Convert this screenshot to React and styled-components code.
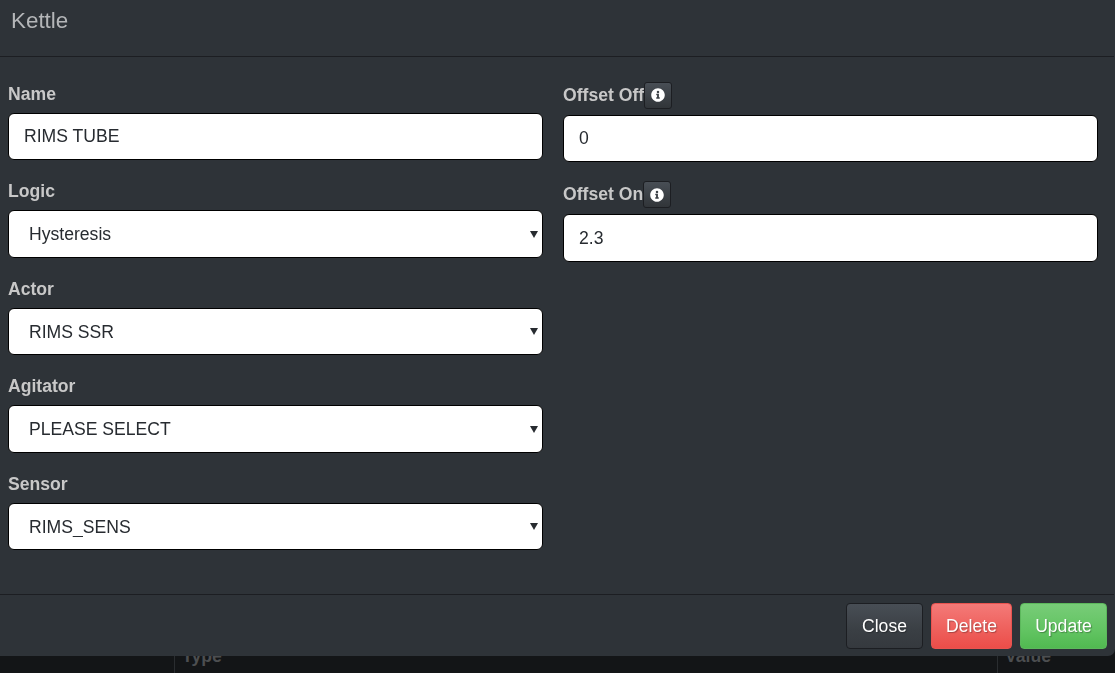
import React from "react";
import styled, { createGlobalStyle } from "styled-components";

const Global = createGlobalStyle`
  html, body { margin: 0; padding: 0; height: 100%; overflow: hidden; background: #131517; }
  body { font-family: "Liberation Sans", Arial, sans-serif; font-size: 17.6px; line-height: 1.42857; color: #c8c8c8; }
  * { box-sizing: border-box; }
`;

const Page = styled.div`
  position: relative;
  width: 1115px;
  height: 673px;
  overflow: hidden;
  background: #131517;
`;

const BackdropTable = styled.div`
  position: absolute;
  left: 174px;
  right: 0;
  top: 640px;
  height: 40px;
  display: flex;
  color: #4c4e50;
  font-weight: 700;
  font-size: 17.6px;
`;

const BackCell = styled.span`
  padding: 4px 0 0 7px;
  border-left: 1px solid #2a2d30;
  flex: ${(p) => (p.$wide ? "0 0 823px" : "1")};
`;

const Modal = styled.div`
  position: relative;
  width: 1115px;
  height: 656px;
  padding-right: 1px;
  background: #2e3338;
  border-radius: 0 0 7px 0;
  display: flex;
  flex-direction: column;
  will-change: transform;
`;

const Header = styled.div`
  height: 57px;
  flex: none;
  padding: 9px 11px 0;
  border-bottom: 1px solid #1c1e22;
`;

const Title = styled.h4`
  margin: 0;
  font-size: 22.4px;
  font-weight: 400;
  line-height: 24px;
  color: #b4b6b8;
`;

const Body = styled.div`
  flex: 1;
  display: grid;
  grid-template-columns: 535px 535px;
  column-gap: 20px;
  padding: 25.9px 8px 0;
`;

const Column = styled.div`
  display: flex;
  flex-direction: column;
`;

const Group = styled.div`
  margin-bottom: 20px;
`;

const Label = styled.label`
  display: flex;
  align-items: center;
  height: ${(p) => p.$h ?? 23}px;
  margin-top: ${(p) => p.$mt ?? 0}px;
  margin-bottom: ${(p) => p.$mb ?? 7}px;
  font-weight: 700;
  font-size: 17.6px;
  color: #c8c8c8;
`;

const Input = styled.input`
  display: block;
  width: 100%;
  height: 47.5px;
  padding: 10px 15px;
  font-family: inherit;
  font-size: 17.6px;
  color: #272b30;
  background: #fff;
  border: 1px solid #000;
  border-radius: 6px;
  outline: none;
`;

const SelectWrap = styled.div`
  position: relative;

  &::after {
    content: "";
    position: absolute;
    right: 5px;
    top: 20.5px;
    border-left: 4px solid transparent;
    border-right: 4px solid transparent;
    border-top: 7px solid #272b30;
    pointer-events: none;
  }
`;

const Select = styled.select`
  display: block;
  width: 100%;
  height: 47.5px;
  padding: 10px 16px 10px 20px;
  appearance: none;
  font-family: inherit;
  font-size: 17.6px;
  color: #272b30;
  background: #fff;
  border: 1px solid #000;
  border-radius: 6px;
  outline: none;
`;

const InfoButton = styled.button`
  display: inline-flex;
  align-items: center;
  justify-content: center;
  width: 28px;
  height: 27px;
  padding: 0;
  color: #fff;
  background: linear-gradient(#484e55, #3a3f44 60%, #313539);
  border: 1px solid #1c1e22;
  border-radius: 3px;
`;

const Footer = styled.div`
  height: 62px;
  flex: none;
  display: flex;
  justify-content: flex-end;
  align-items: flex-start;
  gap: 8px;
  padding: 8px 7px 0 8px;
  border-top: 1px solid #1c1e22;
`;

const Button = styled.button`
  width: ${(p) => p.$w}px;
  height: 46px;
  padding: 0;
  font-family: inherit;
  font-size: 17.6px;
  color: #fff;
  border-radius: 4px;
  border: 1px solid ${(p) => p.$border};
  background: ${(p) => p.$bg};
  text-shadow: 1px 1px 1px rgba(0, 0, 0, 0.3);
`;

const InfoIcon = () => (
  <svg width="14" height="14" viewBox="0 0 512 512" fill="currentColor">
    <path d="M256 8C119 8 8 119 8 256s111 248 248 248 248-111 248-248S393 8 256 8zm0 90a46 46 0 1 1 0 92 46 46 0 0 1 0-92zm64 282c0 7-5 12-12 12H204c-7 0-12-5-12-12v-30c0-7 5-12 12-12h18v-76h-18c-7 0-12-5-12-12v-30c0-7 5-12 12-12h74c7 0 12 5 12 12v118h18c7 0 12 5 12 12v30z" />
  </svg>
);

const selects = [
  ["Logic", "Hysteresis"],
  ["Actor", "RIMS SSR"],
  ["Agitator", "PLEASE SELECT"],
  ["Sensor", "RIMS_SENS"],
];

const offsets = [
  ["Offset Off", "0"],
  ["Offset On", "2.3"],
];

export default function App() {
  return (
    <Page>
      <Global />
      <BackdropTable>
        <BackCell $wide>Type</BackCell>
        <BackCell>Value</BackCell>
      </BackdropTable>
      <Modal>
        <Header>
          <Title>Kettle</Title>
        </Header>
        <Body>
          <Column>
            <Group>
              <Label>Name</Label>
              <Input defaultValue="RIMS TUBE" />
            </Group>
            {selects.map(([label, value]) => (
              <Group key={label}>
                <Label>{label}</Label>
                <SelectWrap>
                  <Select defaultValue={value}>
                    <option>{value}</option>
                  </Select>
                </SelectWrap>
              </Group>
            ))}
          </Column>
          <Column>
            {offsets.map(([label, value]) => (
              <Group key={label}>
                <Label $h={27} $mt={-1} $mb={6}>
                  {label}
                  <InfoButton aria-label="info">
                    <InfoIcon />
                  </InfoButton>
                </Label>
                <Input defaultValue={value} />
              </Group>
            ))}
          </Column>
        </Body>
        <Footer>
          <Button $w={77} $border="#1c1e22" $bg="linear-gradient(#484e55, #3a3f44 60%, #35393e)">Close</Button>
          <Button $w={81} $border="#e9534f" $bg="linear-gradient(#f47a78, #ee5f5b 60%, #ec4d49)">Delete</Button>
          <Button $w={87} $border="#5cb85c" $bg="linear-gradient(#78cc78, #62c462 60%, #51b951)">Update</Button>
        </Footer>
      </Modal>
    </Page>
  );
}
